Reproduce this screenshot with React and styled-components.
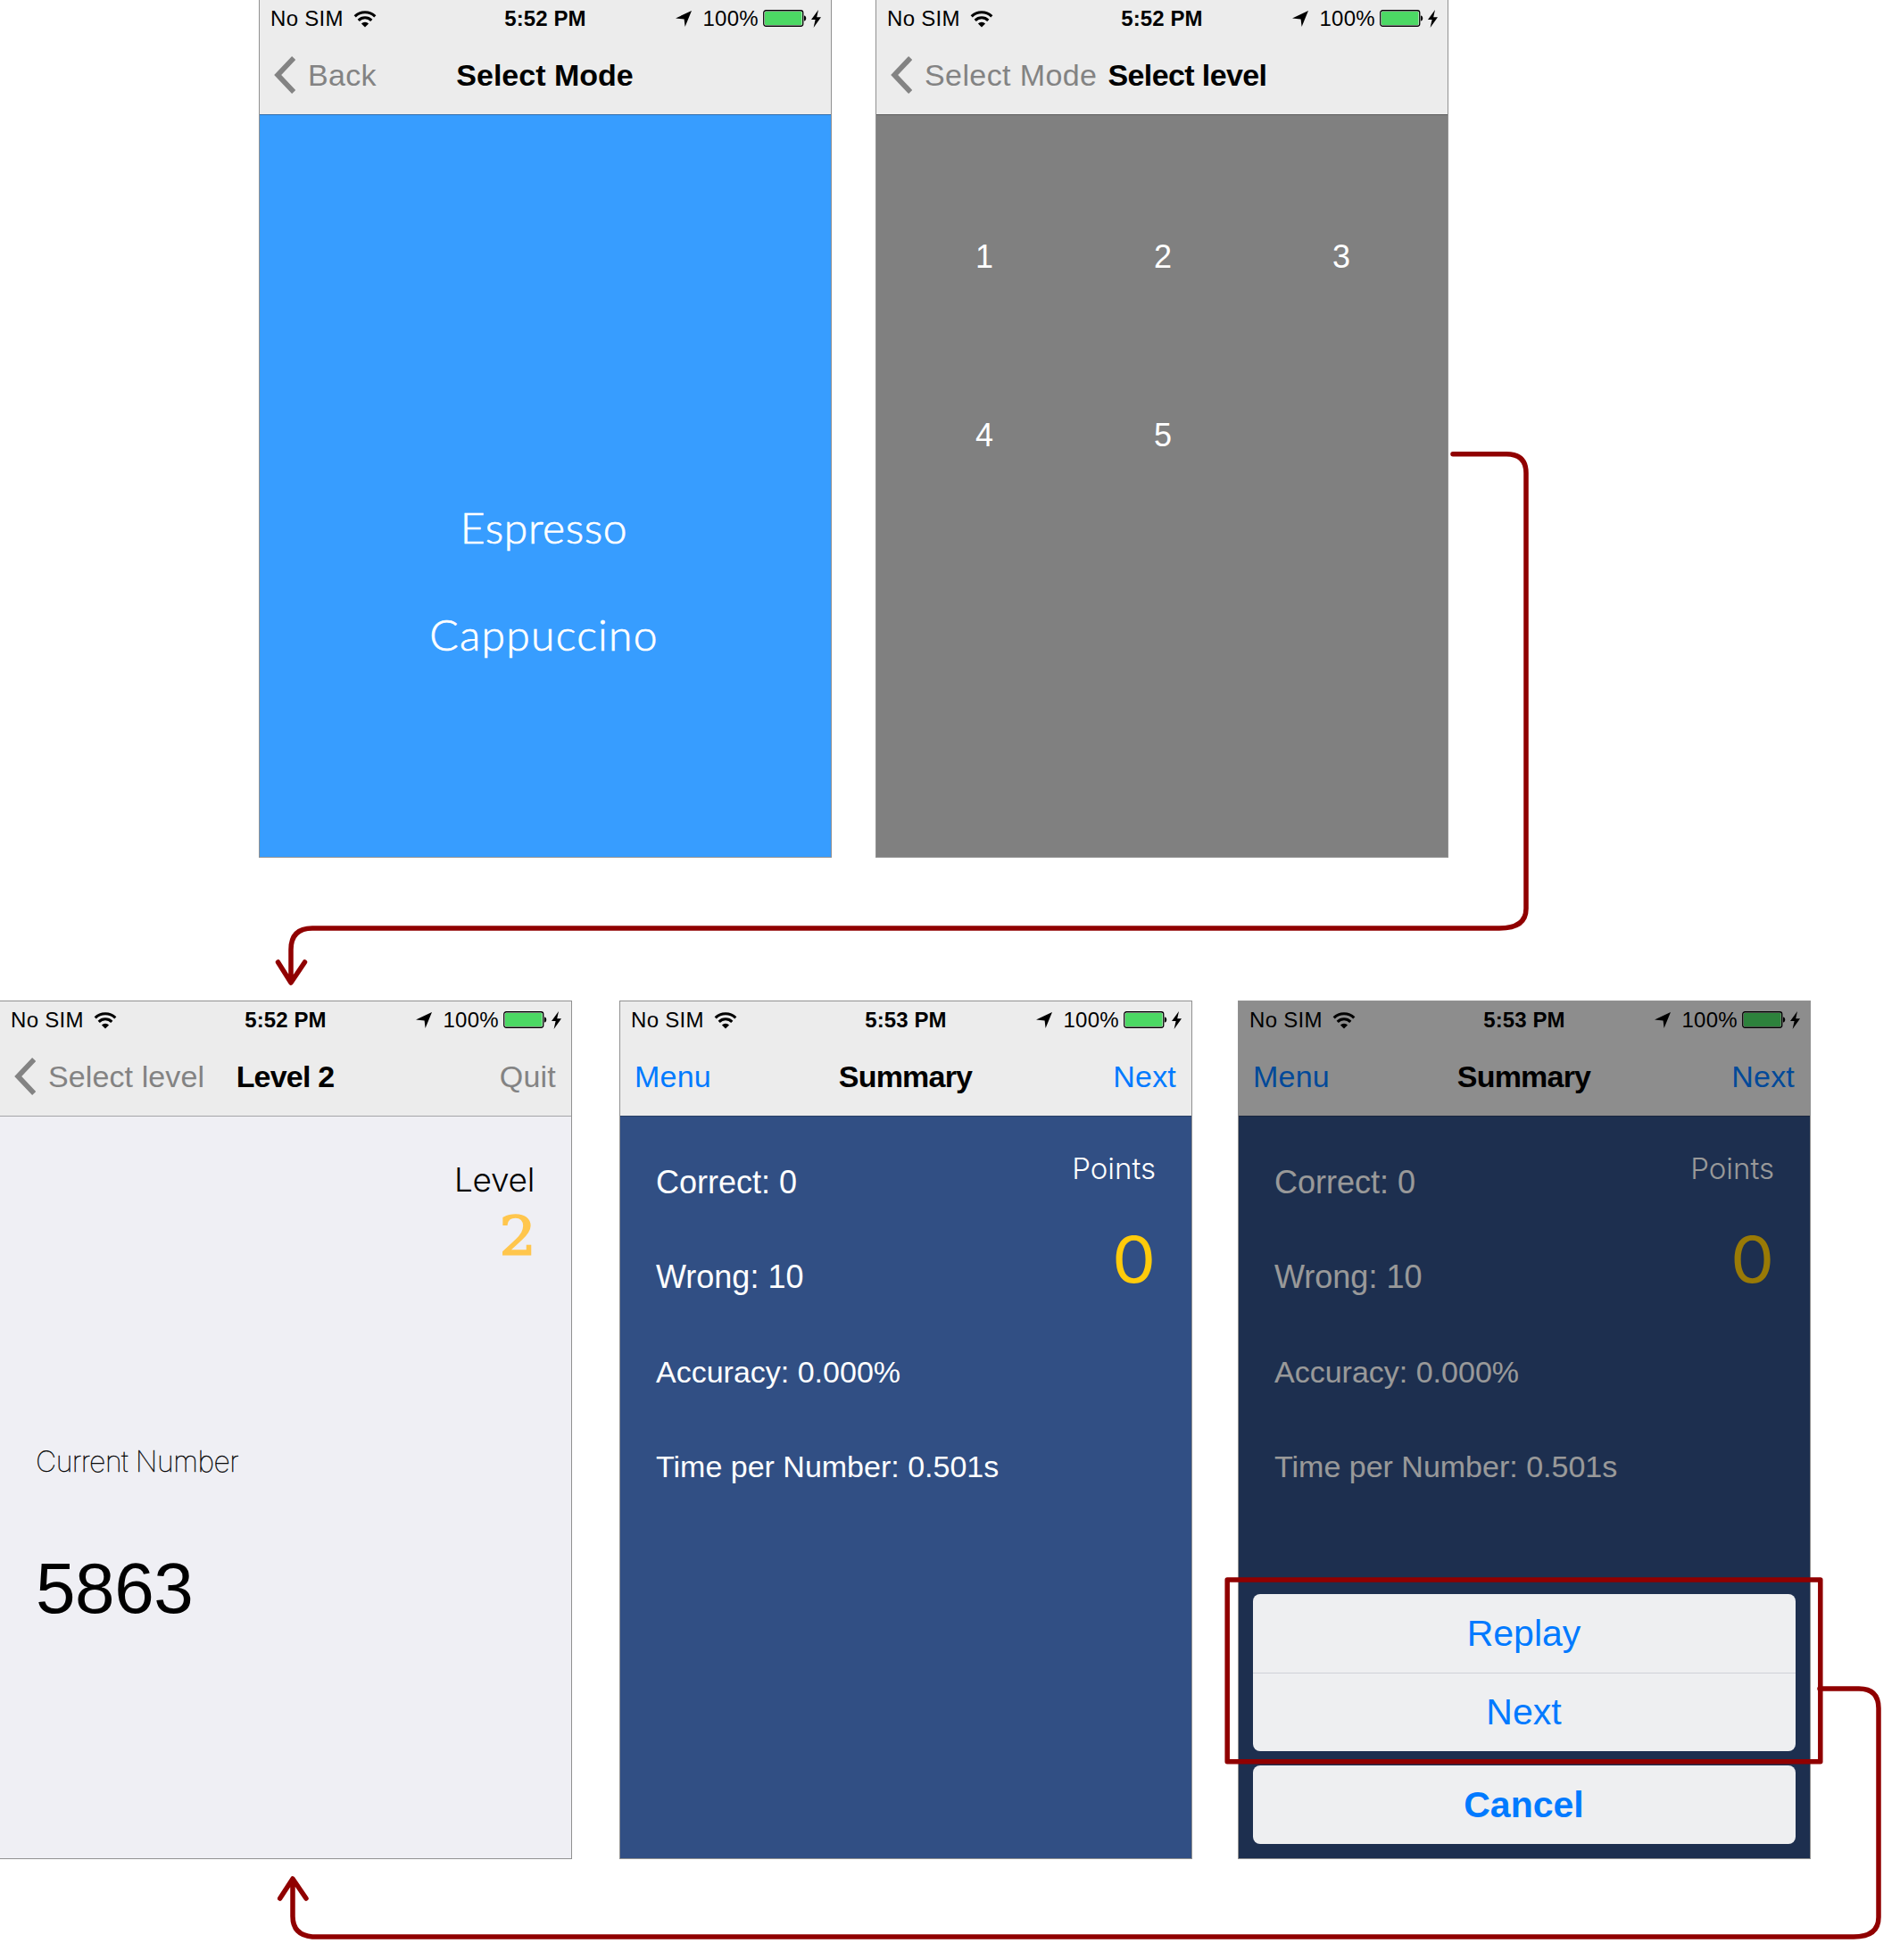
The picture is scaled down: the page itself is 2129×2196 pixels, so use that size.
import React from "react";
import styled, { createGlobalStyle } from "styled-components";

const Global = createGlobalStyle`
  * { box-sizing: border-box; }
  body { margin: 0; background: #fff; font-family: "Liberation Sans", Arial, sans-serif; }
`;

const Page = styled.main`
  position: relative;
  width: 2129px;
  height: 2196px;
  overflow: hidden;
  background: #fff;
`;
const Row = styled.div`
  display: flex;
  height: ${p => p.$h}px;
  padding-left: ${p => p.$left || 0}px;
  margin-bottom: 160px;
`;
const Phone = styled.section`
  position: relative;
  display: flex;
  flex-direction: column;
  flex: none;
  width: ${p => (p.$flush === "left" ? 641 : 642)}px;
  height: 100%;
  margin-right: ${p => p.$gap || 0}px;
  border: 1px solid #919191;
  border-top-width: ${p => (p.$flush === "top" ? 0 : 1)}px;
  border-left-width: ${p => (p.$flush === "left" ? 0 : 1)}px;
  background: ${p => p.$bg};
  color: ${p => p.$ink || "#000"};
`;
const Header = styled.header`
  height: 129px;
  flex: none;
  background: #ececec;
  color: #000;
  border-bottom: 1px solid ${p => p.$line};
`;
const Status = styled.div`
  display: grid;
  grid-template-columns: 1fr auto 1fr;
  align-items: center;
  height: 40px;
  padding: 1px 11px 0 12px;
  font-size: 24px;
  line-height: 40px;
`;
const StatusSide = styled.div`
  display: flex;
  align-items: center;
  justify-content: ${p => (p.$end ? "flex-end" : "flex-start")};
  letter-spacing: 0.3px;
  svg { display: block; flex: none; }
`;
const Clock = styled.b`
  font-size: 24px;
  letter-spacing: 0.1px;
  padding-right: 1px;
`;
const NavBar = styled.nav`
  display: grid;
  grid-template-columns: ${p => (p.$crowded ? "auto 1fr" : "1fr auto 1fr")};
  column-gap: ${p => (p.$crowded ? 12 : 0)}px;
  align-items: center;
  height: 88px;
  padding: 0 17px 0 16px;
  font-size: 34px;
  line-height: 88px;
`;
const NavTitle = styled.h1`
  margin: 0;
  font-size: 34px;
  letter-spacing: ${p => p.$track || 0}px;
`;
const NavAction = styled.a`
  display: flex;
  align-items: center;
  justify-content: ${p => (p.$end ? "flex-end" : "flex-start")};
  color: ${p => (p.$tint ? "#007aff" : "#838383")};
  white-space: nowrap;
  letter-spacing: ${p => p.$track || 0}px;
  svg { margin-right: 14px; flex: none; }
`;

const ModeList = styled.div`
  display: flex;
  flex-direction: column;
  align-items: center;
  padding: 402px 3px 0 0;
  font: 300 48px/120px Lato, sans-serif;
  -webkit-text-stroke: 0.7px currentColor;
`;
const Mode = styled.span`
  letter-spacing: ${p => p.$track}px;
`;
const LevelGrid = styled.div`
  display: grid;
  grid-template-columns: repeat(3, 200px);
  grid-auto-rows: 200px;
  justify-content: center;
  padding: 59px 0 0 2px;
  font-size: 36px;
  line-height: 200px;
  text-align: center;
`;
const LevelInfo = styled.div`
  display: flex;
  flex-direction: column;
  align-items: flex-end;
  height: 357px;
  padding: 48px 41px 0 0;
`;
const LevelLabel = styled.span`
  font: 300 37px/46px Inter, sans-serif;
  letter-spacing: -0.3px;
`;
const LevelValue = styled.span`
  color: #ffc64d;
  font: 400 60px/80px "DejaVu Serif", serif;
  -webkit-text-stroke: 1.6px currentColor;
  transform: scaleX(1.08);
`;
const Current = styled.div`
  display: flex;
  flex-direction: column;
  padding-left: 40px;
`;
const CurrentLabel = styled.span`
  font: 100 32px/60px Inter, sans-serif;
  letter-spacing: -0.5px;
  -webkit-text-stroke: 0.4px currentColor;
`;
const CurrentNumber = styled.span`
  margin-top: 62px;
  font-size: 80px;
  line-height: 100px;
  letter-spacing: -0.4px;
`;

const SummaryBody = styled.div`
  display: flex;
  justify-content: space-between;
  padding: 21px 40px 0 40px;
`;
const Stats = styled.div`
  line-height: 106px;
  white-space: nowrap;
`;
const Stat = styled.div`
  height: 106px;
  font-size: ${p => p.$size}px;
`;
const Points = styled.div`
  display: flex;
  flex-direction: column;
  align-items: flex-end;
  padding-top: 15px;
`;
const PointsLabel = styled.span`
  font: 300 33px/44px Inter, sans-serif;
`;
const PointsValue = styled.span`
  margin-top: 35px;
  color: #ffcb0b;
  font: 400 71px/90px Inter, sans-serif;
  transform: scaleX(1.1);
  transform-origin: 90% 50%;
`;

const Dimmer = styled.div`
  position: absolute;
  inset: 0;
  display: flex;
  flex-direction: column;
  justify-content: flex-end;
  gap: 16px;
  padding: 16px;
  background: rgba(0, 0, 0, 0.4);
`;
const Sheet = styled.div`
  border-radius: 8px;
  background: #eeeff1;
  overflow: hidden;
`;
const SheetButton = styled.button`
  display: block;
  width: 100%;
  height: 88px;
  padding: 0 1px 0 0;
  border: 0;
  border-top: ${p => (p.$ruled ? "1px solid #cfd1d8" : "0")};
  background: none;
  color: #007aff;
  font: ${p => (p.$strong ? 700 : 400)} 41px/87px "Liberation Sans", Arial, sans-serif;
`;
const Flow = styled.svg`
  position: absolute;
  inset: 0;
  fill: none;
  stroke: #900000;
  stroke-width: 5.5;
  stroke-linecap: round;
  stroke-linejoin: round;
`;
const Gap = styled.i`
  width: ${p => p.$w}px;
  flex: none;
`;

const Wifi = () => (
  <svg width="26" height="20" viewBox="0 0 26 20" fill="none" stroke="#000" strokeWidth="3.1">
    <path d="M1.7 7.4a16.1 16.1 0 0 1 22.6 0" />
    <path d="M5.7 11.8a10.4 10.4 0 0 1 14.6 0" />
    <path d="M8.9 15.4a5.8 5.8 0 0 1 8.2 0L13 19.6z" fill="#000" stroke="none" />
  </svg>
);
const Locate = () => (
  <svg width="18" height="18" viewBox="0 0 18 18"><path d="M18 0 10.6 18 9.6 9.4 0 8.4z" /></svg>
);
const Battery = () => (
  <svg width="50" height="20" viewBox="0 0 50 20">
    <rect x=".75" y=".75" width="44" height="17.5" rx="2.5" fill="#f8f8f8" stroke="#000" strokeWidth="1.3" />
    <rect x="2" y="2" width="41.5" height="15" rx="1" fill="#4cd964" />
    <path d="M46 6.5c3 .4 3 5.6 0 6z" />
  </svg>
);
const Bolt = () => (
  <svg width="11" height="20" viewBox="0 0 11 20"><path d="M8 0 0 11h4.6L2.6 20 11 8.3H6.2z" /></svg>
);
const Chevron = () => (
  <svg width="24" height="42" viewBox="0 0 24 42" fill="none" stroke="#838383" strokeWidth="5.8">
    <path d="M22.2 2 4.2 21 22.2 40" />
  </svg>
);

const Top = ({ time, title, track, left, right, line, crowded }) => (
  <Header $line={line}>
    <Status>
      <StatusSide>No SIM<Gap $w={11} /><Wifi /></StatusSide>
      <Clock>{time}</Clock>
      <StatusSide $end><Locate /><Gap $w={12} />100%<Gap $w={5} /><Battery /><Gap $w={4} /><Bolt /></StatusSide>
    </Status>
    <NavBar $crowded={crowded}>
      {left}
      <NavTitle $track={track}>{title}</NavTitle>
      {right}
    </NavBar>
  </Header>
);

const Back = ({ children, track }) => (
  <NavAction $track={track}><Chevron />{children}</NavAction>
);

const stats = [
  ["Correct: 0", 36],
  ["Wrong: 10", 36],
  ["Accuracy: 0.000%", 34],
  ["Time per Number: 0.501s", 34],
];

const Summary = ({ gap, children }) => (
  <Phone $bg="#314f84" $ink="#fff" $gap={gap}>
    <Top
      time="5:53 PM" title="Summary" track={-0.8} line="#293f66"
      left={<NavAction $tint $track={0.2}>Menu</NavAction>}
      right={<NavAction $tint $end $track={0.2}>Next</NavAction>}
    />
    <SummaryBody>
      <Stats>{stats.map(([text, size]) => <Stat key={text} $size={size}>{text}</Stat>)}</Stats>
      <Points>
        <PointsLabel>Points</PointsLabel>
        <PointsValue>0</PointsValue>
      </Points>
    </SummaryBody>
    {children}
  </Phone>
);

export default function App() {
  return (
    <Page>
      <Global />
      <Row $h={961} $left={290}>
        <Phone $bg="#379dff" $ink="#fff" $flush="top" $gap={49}>
          <Top time="5:52 PM" title="Select Mode" line="#2f6dab" left={<Back track={0.3}>Back</Back>} />
          <ModeList>
            <Mode $track={0.6}>Espresso</Mode>
            <Mode $track={1.3}>Cappuccino</Mode>
          </ModeList>
        </Phone>
        <Phone $bg="#808080" $ink="#fff" $flush="top">
          <Top crowded time="5:52 PM" title="Select level" track={-0.6} line="#5b5b5b" left={<Back track={0.4}>Select Mode</Back>} />
          <LevelGrid>{[1, 2, 3, 4, 5].map(n => <span key={n}>{n}</span>)}</LevelGrid>
        </Phone>
      </Row>
      <Row $h={962}>
        <Phone $bg="#efeff4" $flush="left" $gap={53}>
          <Top
            time="5:52 PM" title="Level 2" track={-0.8} line="#a5a5a8"
            left={<Back track={0.1}>Select level</Back>}
            right={<NavAction $end $track={0.2}>Quit</NavAction>}
          />
          <LevelInfo>
            <LevelLabel>Level</LevelLabel>
            <LevelValue>2</LevelValue>
          </LevelInfo>
          <Current>
            <CurrentLabel>Current Number</CurrentLabel>
            <CurrentNumber>5863</CurrentNumber>
          </Current>
        </Phone>
        <Summary gap={51} />
        <Summary>
          <Dimmer>
            <Sheet>
              <SheetButton>Replay</SheetButton>
              <SheetButton $ruled>Next</SheetButton>
            </Sheet>
            <Sheet><SheetButton $strong>Cancel</SheetButton></Sheet>
          </Dimmer>
        </Summary>
      </Row>
      <Flow width="2129" height="2196" viewBox="0 0 2129 2196">
        <path d="M1628 508.7H1688Q1710 508.7 1710 530V1018Q1710 1040 1680 1040H350Q326 1040 326 1064V1100M311.5 1078 326 1101 341.5 1078" />
        <rect x="1375.2" y="1770" width="664.6" height="203.7" />
        <path d="M2039 1892H2083Q2105 1892 2105 1914V2148Q2105 2170 2077 2170H350Q328 2168 328 2147V2106M313.7 2127 328 2105 343 2127" />
      </Flow>
    </Page>
  );
}
